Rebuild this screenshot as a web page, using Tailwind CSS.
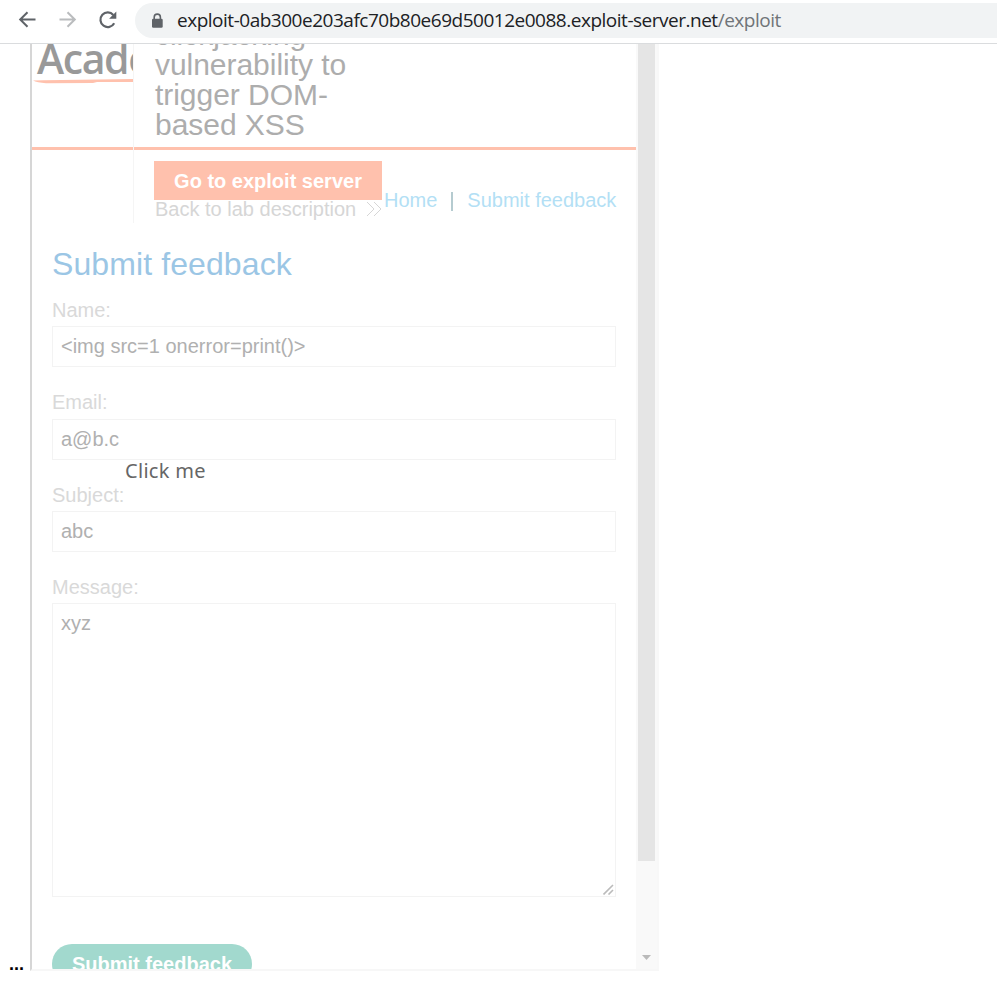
<!DOCTYPE html>
<html lang="en">
<head>
<meta charset="utf-8">
<title>exploit</title>
<script src="https://cdn.jsdelivr.net/npm/@tailwindcss/browser@4"></script>
</head>
<body class="relative h-[982px] w-[997px] overflow-hidden bg-white font-['Liberation_Sans',sans-serif] text-[20px]">
<header class="flex h-[44px] items-start border-b border-[#dadcde] bg-white">
  <svg class="ml-[17px] mt-[9px] shrink-0" width="22" height="22" viewBox="0 0 22 22" fill="none" stroke="#5f6368" stroke-width="2"><path d="M18.500 10.500H3.500M10.500 3.200L3.200 10.500l7.300 7.300"/></svg>
  <svg class="ml-[19px] mt-[9px] shrink-0" width="22" height="22" viewBox="0 0 22 22" fill="none" stroke="#babcbe" stroke-width="2"><path d="M1.500 10.500H16.500M9.500 3.200L16.800 10.500l-7.300 7.300"/></svg>
  <svg class="ml-[17px] mt-[9px] shrink-0" width="22" height="22" viewBox="0 0 22 22" fill="none" stroke="#5f6368" stroke-width="2.200"><path d="M17.200 14.200A7.300 7.300 0 1 1 16.300 6"/><path d="M19.300 2.500V9.700H12.100Z" fill="#5f6368" stroke="none"/></svg>
  <div class="ml-[16px] mt-[3px] flex h-[35px] flex-1 items-center rounded-l-full bg-[#f1f3f4] pl-[16px]">
    <svg class="shrink-0" width="13" height="16" viewBox="0 0 13 16"><path d="M3.200 7V4.200a3.100 3.100 0 0 1 6.200 0V7" fill="none" stroke="#5f6368" stroke-width="1.600"/><rect x="1" y="5.700" width="10.700" height="9" rx="1.300" fill="#5f6368"/></svg>
    <span class="ml-[13px] whitespace-nowrap font-['Open_Sans',sans-serif] text-[19px] tracking-[-0.485px] text-[#202124]">exploit-0ab300e203afc70b80e69d50012e0088.exploit-server.net<span class="text-[#707478]">/exploit</span></span>
  </div>
</header>
<main class="flex">
  <span class="w-[30px] self-end pl-[9px] text-[18px] font-bold leading-[14px] text-black">...</span>
  <section class="flex h-[927px] w-[629px] overflow-hidden border-b-2 border-l-2 border-r-2 border-b-[#f7f7f7] border-l-[#d6d6d6] border-r-[#f8f8f8]">
    <div class="w-[604px] shrink-0">
      <div class="flex h-[106px]">
        <div class="w-[101px] overflow-hidden border-b-[3px] border-[#ffc1ad]">
          <div class="-mt-[6px] h-[41px] whitespace-nowrap pl-[5px] font-['Open_Sans',sans-serif] text-[41px] font-semibold leading-[41px] tracking-[-1.400px] text-[#999]">Academy</div>
          <svg width="101" height="6" viewBox="0 0 101 6"><path d="M1 1.500Q8 1 30 1L101 0V3H65L61 4L14 4.200Q5 3.500 1 1.500Z" fill="#ffc1ad"/></svg>
        </div>
        <div class="w-px bg-[#f5f5f5]"></div>
        <h2 class="flex flex-1 flex-col justify-end overflow-hidden whitespace-nowrap border-b-[3px] border-[#ffc1ad] pb-[7px] pl-[21px] text-[30px] leading-[30px] tracking-[-0.040px] text-[#adadad]"><span>clickjacking</span><span>vulnerability to</span><span>trigger DOM-</span><span>based XSS</span></h2>
      </div>
      <div class="flex h-[73px]">
        <div class="ml-[101px] w-[249px] border-l border-[#f5f5f5] pl-[20px] pt-[11px]">
          <a class="block h-[39px] w-[228px] whitespace-nowrap bg-[#ffc1ad] text-center text-[20px] font-bold leading-[40px] text-white">Go to exploit server</a>
          <a class="flex h-[18px] items-center whitespace-nowrap pl-px leading-[20px] text-[#d6d6d6]">Back to lab description<svg class="ml-[10px] shrink-0" width="16" height="16" viewBox="0 0 16 16" fill="none" stroke="#d6d6d6" stroke-width="1"><path d="M1 1l7 7-7 7M8 1l7 7-7 7"/></svg></a>
        </div>
        <nav class="ml-[2px] mt-[39px] flex h-[23px] items-center whitespace-nowrap leading-[23px] text-[#b3dff5]"><a>Home</a><i class="ml-[14px] mt-[1px] h-[19px] w-[2px] bg-[#b5cbd0]"></i><a class="ml-[14px]">Submit feedback</a></nav>
      </div>
      <form class="px-[20px] text-[#b0b0b0]">
        <h1 class="h-[79px] pt-[23px] text-[32px] leading-[36px] tracking-[0.100px] text-[#9bc6e5]">Submit feedback</h1>
        <label class="-mt-[3px] block h-[24px] leading-[23px] text-[#d9d9d9]">Name:</label>
        <div class="mt-[3px] h-[41px] border border-[#f3f3f3] px-[8px] leading-[39px]">&lt;img src=1 onerror=print()&gt;</div>
        <label class="mt-[24px] block h-[26px] leading-[22px] text-[#d9d9d9]">Email:</label>
        <div class="mt-[2px] h-[41px] border border-[#f3f3f3] px-[8px] leading-[39px]">a@b.c</div>
        <label class="mt-[24px] block h-[26px] leading-[22px] text-[#d9d9d9]">Subject:</label>
        <div class="mt-px h-[41px] border border-[#f3f3f3] px-[8px] leading-[39px]">abc</div>
        <label class="mt-[24px] block h-[26px] leading-[22px] text-[#d9d9d9]">Message:</label>
        <div class="mt-px flex h-[294px] justify-between border border-[#f3f3f3] pl-[8px] leading-[39px]"><span>xyz</span><svg class="mb-[1px] mr-[1px] self-end" width="11" height="11" viewBox="0 0 11 11" stroke="#bbb" stroke-width="1.600"><path d="M0.500 10.500L10 1M5.500 10.500L10 6"/></svg></div>
        <button class="mt-[47px] block h-[40px] w-[200px] rounded-full bg-[#a2d9ce] text-[20px] font-bold leading-[40px] text-white">Submit feedback</button>
      </form>
    </div>
    <div class="flex w-[21px] flex-col items-center bg-[#f9f9f9]">
      <div class="h-[817px] w-[17px] bg-[#e5e5e5]"></div>
      <svg class="mt-[94px]" width="9" height="5" viewBox="0 0 9 5"><path d="M0 0h9L4.500 5Z" fill="#bababa"/></svg>
    </div>
  </section>
</main>
<div class="absolute left-[125px] top-[457px] whitespace-nowrap font-['Noto_Sans',sans-serif] text-[20px] leading-[28px] tracking-[0.300px] text-[#666]">Click me</div>
</body>
</html>
